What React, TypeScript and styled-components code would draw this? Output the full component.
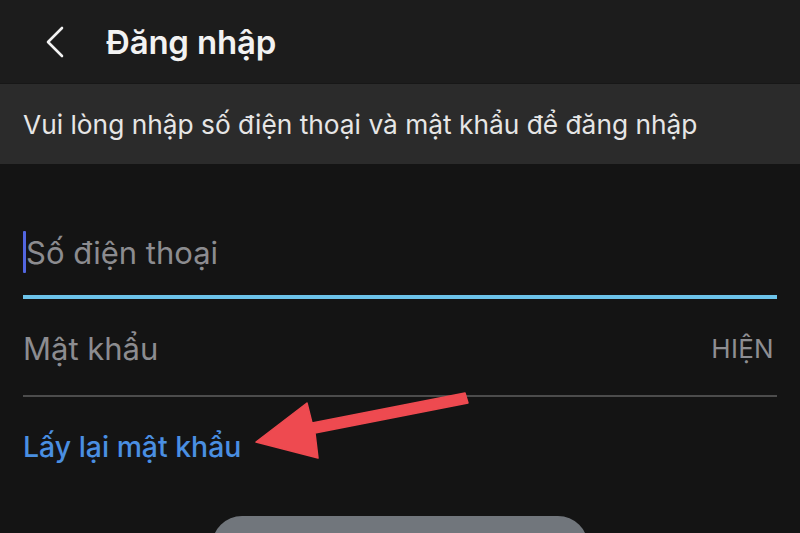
import React from "react";
import styled, { createGlobalStyle } from "styled-components";

const Global = createGlobalStyle`
  html, body { margin: 0; padding: 0; background: #141414; }
  body { font-family: Inter, "Noto Sans", sans-serif; -webkit-font-smoothing: antialiased; }
  * { box-sizing: border-box; }
`;

const Page = styled.div`
  position: relative;
  width: 800px;
  height: 533px;
  overflow: hidden;
  background: #141414;
`;

const Header = styled.header`
  height: 84px;
  background: #1c1c1c;
  display: flex;
  align-items: center;
  padding-left: 44px;
  gap: 40px;
  border-bottom: 1px solid #171717;
`;

const BackButton = styled.button`
  width: 22px;
  height: 32px;
  padding: 0;
  border: 0;
  background: none;
  display: flex;
  align-items: center;
  justify-content: center;
`;

const Title = styled.h1`
  margin: 0;
  color: #f2f2f2;
  font-size: 33px;
  font-weight: 600;
  letter-spacing: -0.2px;
`;

const Notice = styled.div`
  height: 80px;
  background: #2b2b2b;
  display: flex;
  align-items: center;
  padding-left: 23px;
  color: #e6e6e6;
  font-size: 26.3px;
  font-weight: 400;
`;

const Form = styled.div`
  padding: 36px 23px 0 23px;
  display: flex;
  flex-direction: column;
`;

const Field = styled.div<{ $active?: boolean; $h: number; $pb: number }>`
  height: ${(p) => p.$h}px;
  display: flex;
  align-items: flex-end;
  justify-content: space-between;
  padding-bottom: ${(p) => p.$pb}px;
  border-bottom: ${(p) => (p.$active ? "4px solid #6cc3ea" : "2px solid #4c4c4c")};
`;

const Placeholder = styled.span`
  display: flex;
  align-items: center;
  height: 42px;
  font-size: 31px;
  color: #8c8c90;
  font-weight: 400;
`;

const Caret = styled.span`
  width: 3px;
  height: 42px;
  background: #5266e0;
  border-radius: 1px;
`;

const Toggle = styled.span`
  font-size: 26px;
  color: #8e8e92;
  height: 42px;
  display: flex;
  align-items: center;
  padding-right: 3px;
  letter-spacing: 0.3px;
`;

const Link = styled.a`
  margin-top: 31px;
  height: 36px;
  display: flex;
  align-items: center;
  font-size: 28.4px;
  font-weight: 500;
  color: #4a8fe2;
  text-decoration: none;
`;

const Submit = styled.button`
  align-self: center;
  margin-top: 52px;
  width: 376px;
  height: 60px;
  border: 0;
  border-radius: 32px;
  background: #71767c;
`;

const Arrow = styled.svg`
  position: absolute;
  left: 0;
  top: 0;
  pointer-events: none;
`;

export default function App() {
  return (
    <Page>
      <Global />
      <Header>
        <BackButton aria-label="Quay lại">
          <svg width="20" height="32" viewBox="0 0 20 32">
            <path d="M17 2 L3 16 L17 30" fill="none" stroke="#f2f2f2" strokeWidth="2.6" strokeLinecap="round" strokeLinejoin="round" />
          </svg>
        </BackButton>
        <Title>Đăng nhập</Title>
      </Header>
      <Notice>Vui lòng nhập số điện thoại và mật khẩu để đăng nhập</Notice>
      <Form>
        <Field $active $h={99} $pb={22}>
          <Placeholder>
            <Caret />
            Số điện thoại
          </Placeholder>
        </Field>
        <Field $h={98} $pb={26}>
          <Placeholder>Mật khẩu</Placeholder>
          <Toggle>HIỆN</Toggle>
        </Field>
        <Link href="#">Lấy lại mật khẩu</Link>
        <Submit />
      </Form>
      <Arrow width="800" height="533" viewBox="0 0 800 533">
        <polygon
          points="468,403 465,393 312,423 307,403 256,442 318,458 315,433"
          fill="#ee4a50"
          stroke="#ee4a50"
          strokeWidth="1.5"
          strokeLinejoin="round"
        />
      </Arrow>
    </Page>
  );
}
